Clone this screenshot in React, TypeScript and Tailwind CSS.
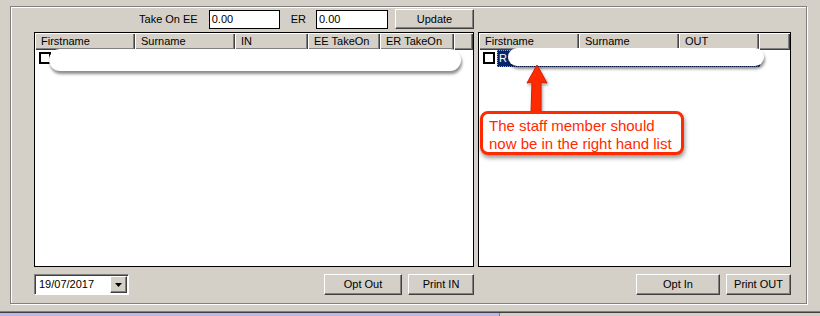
import React from "react";

const raised =
  "bg-[#d4d0c8] border border-t-white border-l-white border-r-[#404040] border-b-[#404040] shadow-[inset_-1px_-1px_0_#808080]";

type Col = { label: string; w: string };

const leftCols: Col[] = [
  { label: "Firstname", w: "w-[100px]" },
  { label: "Surname", w: "w-[100px]" },
  { label: "IN", w: "w-[73px]" },
  { label: "EE TakeOn", w: "w-[72px]" },
  { label: "ER TakeOn", w: "w-[74px]" },
  { label: "", w: "flex-1" },
];

const rightCols: Col[] = [
  { label: "Firstname", w: "w-[100px]" },
  { label: "Surname", w: "w-[100px]" },
  { label: "OUT", w: "w-[80px]" },
  { label: "", w: "flex-1" },
];

function Button({ label, w }: { label: string; w: string }) {
  return (
    <div className={`${raised} ${w} h-full flex items-center justify-center`}>
      {label}
    </div>
  );
}

function ListView({ cols, h }: { cols: Col[]; h: string }) {
  return (
    <div className={`${h} mt-[3px] border border-black bg-white flex flex-col`}>
      <div className="flex h-[17px] shrink-0">
        {cols.map((c, i) => (
          <div
            key={"col" + i}
            className={`${c.w} h-full bg-[#d4d0c8] pl-[6px] flex items-center shadow-[inset_1px_1px_0_#fff,inset_-1px_-1px_0_#404040,inset_-2px_-2px_0_#808080]`}
          >
            {c.label}
          </div>
        ))}
      </div>
      <div className="flex pl-[4px] pt-[2px]">
        <div className="w-[12px] h-[12px] border-2 border-black bg-white" />
      </div>
    </div>
  );
}

export default function App() {
  return (
    <div className="w-[820px] h-[316px] bg-[#d4d0c8] relative overflow-hidden flex flex-col font-['Liberation_Sans',Arial,sans-serif] text-[11px] text-black leading-none">
      <div className="ml-[10px] mt-[6px] w-[797px] h-[298px] border border-[#808080] shadow-[inset_1px_1px_0_#fff,1px_1px_0_#fff] flex pl-[23px] pt-[2px] gap-[4px]">
        {/* left side */}
        <div className="w-[440px] flex flex-col">
          <div className="h-[20px] flex items-center justify-end">
            <span className="mr-[11px]">Take On EE</span>
            <div className="w-[71px] h-[19px] border border-black bg-white pl-[2px] flex items-center">
              0.00
            </div>
            <span className="ml-[11px] mr-[10px]">ER</span>
            <div className="w-[72px] h-[19px] border border-black bg-white pl-[2px] flex items-center">
              0.00
            </div>
            <div className="ml-[7px] h-[20px] flex">
              <Button label="Update" w="w-[79px]" />
            </div>
          </div>
          <ListView cols={leftCols} h="h-[235px]" />
          <div className="mt-[7px] h-[21px] flex items-center">
            <div className="w-[95px] h-[21px] bg-white border border-t-[#808080] border-l-[#808080] border-r-white border-b-white shadow-[inset_1px_1px_0_#404040] flex items-center pl-[4px] pr-[1px]">
              <span className="flex-1">19/07/2017</span>
              <div className={`${raised} w-[17px] h-[17px] flex items-center justify-center`}>
                <svg width="7" height="4" viewBox="0 0 7 4">
                  <path d="M0 0h7L3.5 4z" fill="#000" />
                </svg>
              </div>
            </div>
            <div className="ml-auto h-[21px] flex gap-[6px]">
              <Button label="Opt Out" w="w-[78px]" />
              <Button label="Print IN" w="w-[66px]" />
            </div>
          </div>
        </div>
        {/* right side */}
        <div className="w-[313px] flex flex-col">
          <div className="h-[20px]" />
          <ListView cols={rightCols} h="h-[235px]" />
          <div className="mt-[7px] h-[21px] flex justify-end gap-[6px]">
            <Button label="Opt In" w="w-[84px]" />
            <Button label="Print OUT" w="w-[65px]" />
          </div>
        </div>
      </div>

      {/* bottom status edge */}
      <div className="mt-auto h-[5px] flex flex-col">
        <div className="h-px bg-[#808080]" />
        <div className="h-px bg-[#404040]" />
        <div className="flex-1 flex">
          <div className="w-[499px] bg-[#b8b8ea]" />
          <div className="w-px bg-[#808080]" />
          <div className="flex-1 bg-[#d4d0c8]" />
        </div>
      </div>

      {/* annotations laid over the screenshot */}
      <div className="absolute left-[49px] top-[49px] w-[412px] h-[22px] rounded-full bg-white shadow-[1px_3px_3px_rgba(0,0,0,0.45)]" />
      <div className="absolute left-[497px] top-[50px] w-[263px] h-[17px] bg-[#0a246a] border border-dotted border-[#9aa6c8] text-white pl-[1px] flex items-center">
        R
      </div>
      <div className="absolute left-[508px] top-[48px] w-[256px] h-[18px] rounded-full bg-white shadow-[1px_3px_3px_rgba(0,0,0,0.45)]" />
      <svg
        className="absolute left-[520px] top-[60px]"
        width="36"
        height="56"
        viewBox="0 0 36 56"
      >
        <path
          d="M17 5 L27 23 L21 22 L21 53 L11 53 L12 22 L7 23 Z"
          fill="#ff2a00"
          stroke="#d81e00"
          strokeWidth="1"
          strokeLinejoin="round"
          style={{ filter: "drop-shadow(1px 2px 1.5px rgba(0,0,0,0.4))" }}
        />
      </svg>
      <div className="absolute left-[480px] top-[111px] w-[204px] h-[44px] rounded-[8px] border-[3px] border-[#ff2a00] bg-white shadow-[1px_3px_4px_rgba(0,0,0,0.4)] pl-[6px] pt-[3px] text-[15px] leading-[18px] text-[#ff2a00] font-['Liberation_Sans',Arial,sans-serif]">
        The staff member should
        <br />
        now be in the right hand list
      </div>
    </div>
  );
}
